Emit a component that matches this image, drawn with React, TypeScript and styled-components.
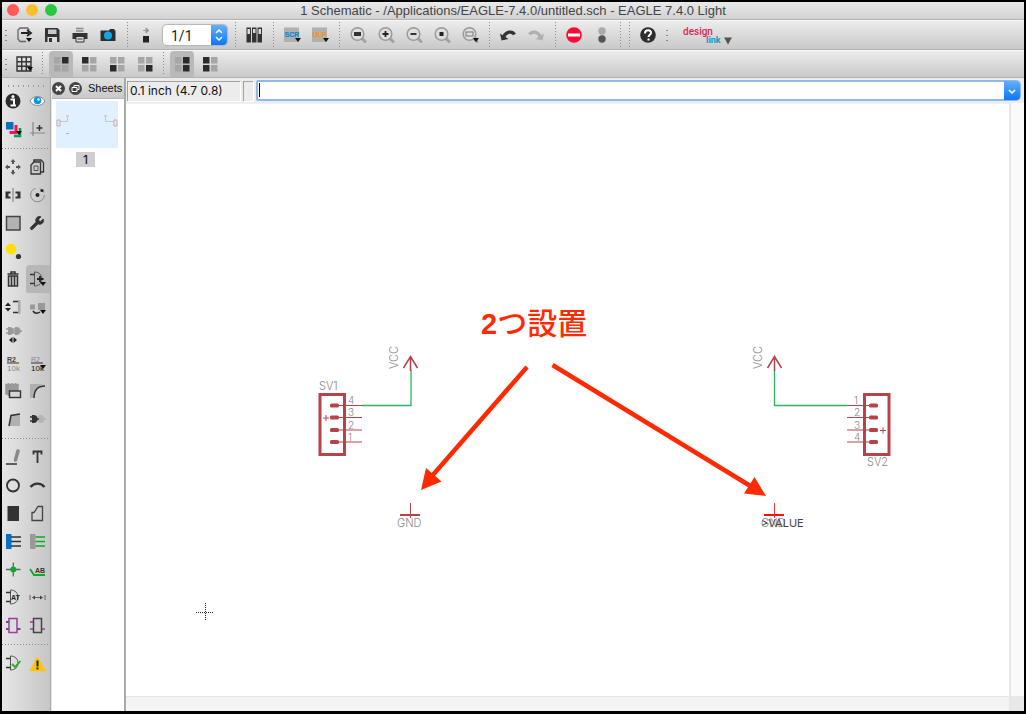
import React from "react";
import styled, { createGlobalStyle, css } from "styled-components";
import { Wrench } from "lucide-react";

const DARK = "#333";
const PALE = "#b0b0b0";
const GREEN = "#0bab2c";
const PART = "#b8424a";
const NOTE = "#ff2a00";

const GlobalStyle = createGlobalStyle`
  *, *::before, *::after { box-sizing: border-box; }
  body { margin: 0; background: #000; font-family: Inter, "Liberation Sans", sans-serif; color: #222; }
  button, input, select { font: inherit; color: inherit; margin: 0; padding: 0; border: 0; background: none; }
  svg { display: block; }
`;

const Frame = styled.div`
  display: flex;
  flex-direction: column;
  min-height: 100vh;
  border: 2px solid #000;
  border-bottom-width: 3px;
  background: #ececec;
`;

const TitleBar = styled.header`
  position: relative;
  display: flex;
  align-items: center;
  justify-content: center;
  height: 18px;
  background: linear-gradient(#e9e9e9, #d2d2d2);
  border-bottom: 1px solid #b4b4b4;
`;

const Title = styled.h1`
  margin: 0;
  font-family: "Liberation Sans", sans-serif;
  font-size: 13px;
  line-height: 16px;
  font-weight: 400;
  color: #444;
`;

const Lights = styled.div`
  position: absolute;
  left: 5px;
  top: 2px;
  display: flex;
  gap: 7px;
`;

const Light = styled.button<{ $color: string }>`
  width: 12px;
  height: 12px;
  border-radius: 50%;
  background: ${(p) => p.$color};
`;

const Toolbar = styled.div<{ $height: number }>`
  display: flex;
  align-items: center;
  height: ${(p) => p.$height}px;
  background: linear-gradient(#ececec, #c9c9c9);
  border-top: 1px solid #f8f8f8;
  border-bottom: 1px solid #b2b2b2;
`;

const Handle = styled.span<{ $width?: number }>`
  flex: none;
  width: ${(p) => p.$width ?? 8}px;
  height: 15px;
  background: radial-gradient(circle, #888 1px, transparent 1px) center / 4px 5px;
  background-repeat: no-repeat repeat;
`;

const Separator = styled.span<{ $width?: number }>`
  flex: none;
  align-self: stretch;
  width: ${(p) => p.$width ?? 10}px;
  margin: 1px 0;
  background: repeating-linear-gradient(#8c8c8c 0 1px, transparent 1px 3px) center / 1px 100% no-repeat;
`;

const pressed = css`
  &::before {
    content: "";
    position: absolute;
    inset: 1px 2px;
    border-radius: 4px 4px 2px 2px;
    background: #b9b9b9;
  }
`;

const ToolButton = styled.button<{ $on?: boolean }>`
  position: relative;
  flex: none;
  width: 28px;
  height: 28px;
  ${(p) => p.$on && pressed}
  svg { position: relative; }
`;

const PageSelect = styled.div`
  position: relative;
  flex: none;
  width: 64px;
  height: 20px;
  margin: 0 3px;
  border-radius: 4px;
  background: #fff;
  box-shadow: 0 0 1px 1px #b5b5b5;
  overflow: hidden;
  select {
    appearance: none;
    width: 100%;
    height: 20px;
    padding-left: 8px;
    font-family: Roboto, sans-serif;
    font-size: 14px;
    line-height: 20px;
  }
`;

const Stepper = styled.span`
  position: absolute;
  right: 0;
  top: 0;
  width: 16px;
  height: 100%;
  background: linear-gradient(#66aefb, #0a77f8);
  pointer-events: none;
`;

const LinkButton = styled.button`
  margin-left: 10px;
  height: 28px;
`;

const Body = styled.div`
  flex: 1;
  display: flex;
`;

const Palette = styled.aside`
  flex: none;
  width: 49px;
  background: linear-gradient(90deg, #e6e6e6, #c6c6c6);
  border-right: 1px solid #a9a9a9;
`;

const PaletteHandle = styled.div`
  height: 9px;
  margin: 0 4px;
  background: radial-gradient(circle, #999 1px, transparent 1px) 0 6px / 5px 4px repeat-x;
`;

const PaletteGrid = styled.div`
  display: grid;
  grid-template-columns: 24px 24px;
  grid-auto-rows: 28px;
`;

const PaletteRule = styled.div`
  height: 10px;
  background: repeating-linear-gradient(90deg, #8c8c8c 0 1px, transparent 1px 3px) center / 100% 1px no-repeat;
`;

const PaletteButton = styled.button<{ $on?: boolean }>`
  width: 24px;
  height: 28px;
  ${(p) => p.$on && "background: #b7b7b7; border-radius: 4px 0 0 2px;"}
`;

const Sheets = styled.section`
  flex: none;
  width: 75px;
  background: #fff;
  border-left: 1px solid #e8e8e8;
  border-right: 2px solid #a9a9a9;
`;

const SheetsHeader = styled.div`
  display: flex;
  align-items: center;
  gap: 4px;
  height: 21px;
  background: linear-gradient(#e4e4e4, #c8c8c8);
  border-bottom: 1px solid #b5b5b5;
`;

const SheetsTitle = styled.h2`
  margin: 0 0 0 2px;
  font-family: "Liberation Sans", sans-serif;
  font-size: 11px;
  line-height: 16px;
  font-weight: 400;
  color: #111;
`;

const RoundButton = styled.button`
  width: 13px;
  height: 13px;
`;

const SheetItem = styled.button`
  display: flex;
  flex-direction: column;
  align-items: center;
  gap: 4px;
  margin: 2px 4px;
  width: 62px;
`;

const Thumb = styled.span`
  background: #e0f0ff;
`;

const SheetNumber = styled.span`
  width: 19px;
  margin-right: 3px;
  font-size: 12px;
  line-height: 15px;
  font-weight: 500;
  background: #cfcfcf;
`;

const Main = styled.main`
  flex: 1;
  min-width: 0;
  display: flex;
  flex-direction: column;
`;

const CommandRow = styled.div`
  display: flex;
  align-items: center;
  gap: 3px;
  height: 25px;
  padding: 0 3px 0 1px;
  background: #ececec;
`;

const Sunken = styled.output<{ $width: number }>`
  flex: none;
  width: ${(p) => p.$width}px;
  height: 20px;
  padding-left: 2px;
  font-size: 12px;
  line-height: 18px;
  color: #111;
  white-space: nowrap;
  border: solid #a2a2a2;
  border-width: 1px 0 0 1px;
  box-shadow: 1px 1px 0 #fff;
`;

const Command = styled.div`
  position: relative;
  flex: 1;
  display: flex;
  height: 21px;
  border: 2px solid #8db8f0;
  border-radius: 2px 5px 5px 2px;
  background: #fff;
  input { flex: 1; min-width: 0; padding: 0 6px; font-size: 12px; outline: 0; }
  &::before {
    content: "";
    position: absolute;
    left: 1px;
    top: 1px;
    width: 1px;
    height: 14px;
    background: #000;
  }
`;

const DropButton = styled.button`
  width: 16px;
  margin: -1px -1px -1px 0;
  border-radius: 0 4px 4px 0;
  background: linear-gradient(#66aefb, #0a77f8);
`;

const Workspace = styled.div`
  flex: 1;
  display: grid;
  grid-template-columns: minmax(0, 1fr) 15px;
  grid-template-rows: 1fr 15px;
`;

const Canvas = styled.div`
  min-height: 592px;
  overflow: hidden;
  background: #fff;
  border-top: 1px solid #f0f0f0;
`;

const Track = styled.div<{ $side?: boolean }>`
  background: ${(p) => (p.$side ? "#fafafa" : "#f4f4f4")};
  border: 0 solid #e6e6e6;
  border-width: ${(p) => (p.$side ? "0 0 0 2px" : "1px 0 0")};
`;

const Corner = styled.div`
  background: #e8e8e8;
`;

type Drawn = { label: string; on?: boolean; children: React.ReactNode };

const Tool = ({ label, on, children }: Drawn) => (
  <ToolButton aria-label={label} $on={on}>
    <svg width="28" height="28" viewBox="-14 -14 28 28" fill="none">{children}</svg>
  </ToolButton>
);

const Cell = ({ label, on, children }: Drawn) => (
  <PaletteButton aria-label={label} $on={on}>
    <svg width="24" height="28" viewBox="-11 -14 24 28" fill="none">{children}</svg>
  </PaletteButton>
);

const Caret = ({ x = 6, y = 5 }: { x?: number; y?: number }) => (
  <path d={`M${x - 3} ${y - 2}h6l-3 4z`} fill="#111" />
);

const Lens = ({ children }: { children: React.ReactNode }) => (
  <>
    <path d="M4 3.500L7 6.500" stroke="#a2a2a2" strokeWidth="3" strokeLinecap="round" />
    <circle cx="-0.500" cy="-1" r="6.300" stroke="#999" strokeWidth="1.500" fill="#dedede" />
    {children}
  </>
);

const Quad = ({ dark }: { dark: number[] }) => (
  <>
    {[[-7, -7], [1, -7], [-7, 1], [1, 1]].map(([x, y], i) => (
      <rect key={i} x={x} y={y} width="6.500" height="6.500" fill={dark.includes(i) ? "#2b2b2b" : "#a6a6a6"} />
    ))}
  </>
);

const Gate = () => (
  <>
    <path d="M-2.500-7C2.500-7 5-3.500 5 0S2.500 7-2.500 7z" stroke="#555" />
    <path d="M-7-4.500h4.500M-7 4.500h4.500" stroke={DARK} strokeWidth="1.500" />
  </>
);

const Plug = ({ x, y, color }: { x: number; y: number; color: string }) => (
  <g fill={color}>
    <path d={`M${x} ${y - 4}h1.500c3 0 4 2 4 4s-1 4-4 4H${x}z`} />
    <path d={`M${x - 2} ${y - 2}h2M${x - 2} ${y + 2}h2M${x + 5} ${y}h2`} stroke={color} strokeWidth="1.300" />
  </g>
);

const SmallText = (p: React.SVGProps<SVGTextElement>) => (
  <text fontFamily="Liberation Sans, sans-serif" fontSize="8" {...p} />
);

const Arrow = () => (
  <>
    <path d="M-8-1.500L-6.500 5.500 0.500 4z" fill="currentColor" />
    <path d="M-4.500 2C-2-3.500 4-4.500 6.500-0.500" stroke="currentColor" strokeWidth="3.200" />
  </>
);

const pinRows = [405.5, 417.5, 430, 442];

type HeaderProps = { x: number; pinFrom: number; pinTo: number; padX: number; plusX: number; plusRow: number; nameX: number; names: string[] };

const Header = ({ x, pinFrom, pinTo, padX, plusX, plusRow, nameX, names }: HeaderProps) => (
  <g>
    <rect x={x} y="394.500" width="24.500" height="60" stroke={PART} strokeWidth="3" fill="none" />
    {pinRows.map((y, i) => (
      <g key={y}>
        <path d={`M${pinFrom} ${y}H${pinTo}`} stroke={PART} />
        <rect x={padX} y={y - 2} width="9" height="4" rx="1.500" fill={PART} />
        <text x={nameX} y={y - 1.5} fontSize="10">{names[i]}</text>
      </g>
    ))}
    <path d={`M${plusX - 3} ${pinRows[plusRow] + 0.5}h6m-3-3v6`} stroke={PART} />
  </g>
);

const Supply = ({ x }: { x: number }) => (
  <g>
    <path d={`M${x} 371V356M${x - 7} 368L${x} 356.500L${x + 7} 368`} stroke={PART} strokeWidth="1.500" fill="none" />
    <text transform={`translate(${x - 12.5} 369) rotate(-90)`} fontSize="11">VCC</text>
  </g>
);

const Schematic = () => (
  <svg width="884" height="592" viewBox="126 104 884 592" role="img" aria-label="Schematic" fontFamily="Inter, sans-serif" fontWeight="300" fill="#888">
    <g>
      <path d="M362 405.500H411V370M774.500 370V405.500H847" stroke="#2bb45d" strokeWidth="1.300" fill="none" />
      <Header x={320} pinFrom={336} pinTo={362} padX={330} plusX={326} plusRow={1} nameX={348} names={["4", "3", "2", "1"]} />
      <Header x={864.5} pinFrom={847} pinTo={872} padX={869} plusX={883} plusRow={2} nameX={854} names={["1", "2", "3", "4"]} />
      <Supply x={410.5} />
      <Supply x={774.5} />
      <text x="319" y="390" fontSize="11">SV1</text>
      <text x="867" y="466" fontSize="11">SV2</text>
      <path d="M410.500 503V518" stroke={PART} />
      <path d="M400 515H420" stroke={PART} strokeWidth="2" />
      <text x="397" y="527" fontSize="11">GND</text>
      <path d="M774.500 503V518" stroke="#ff3040" />
      <path d="M764 515H784" stroke="#ff1010" strokeWidth="2" />
      <text x="761" y="527" fontSize="11">GND</text>
      <text x="761" y="527" fontSize="11" fontWeight="400" fill="#444">&gt;VALUE</text>
      <path d="M196 612.500H214M205.500 603V621" stroke="#222" strokeDasharray="1 1" />
    </g>
    <g fill={NOTE} stroke="none">
      <path d="M527 367L432 476M552.500 365L752 487" stroke={NOTE} strokeWidth="4.500" />
      <path d="M421 490L426 468L441.500 481.500zM766 496L754.500 477L744 493.500z" />
      <text x="481" y="334" fontSize="30" fontFamily="'Liberation Sans', 'Noto Sans CJK JP', sans-serif">
        <tspan fontWeight="700" fontSize="29">2</tspan>
        <tspan fontFamily="'Noto Sans CJK JP', sans-serif" fontWeight="500">つ設置</tspan>
      </text>
    </g>
  </svg>
);

const ToolPalette = () => (
  <Palette aria-label="Tools">
    <PaletteHandle />
    <PaletteGrid>
      <Cell label="Info">
        <circle r="7.500" fill="#2c2c2c" />
        <path d="M-2.500-1.500H1V4M-2.500 4.500H3" stroke="#fff" strokeWidth="2" />
        <circle cx="0" cy="-4.500" r="1.500" fill="#fff" />
      </Cell>
      <Cell label="Show">
        <path d="M-7 0C-4-6 5-6 8 0 5 6-4 6-7 0z" fill="#fff" stroke="#888" />
        <circle cx="0.500" cy="-0.500" r="3.800" fill="#0d97e8" />
        <circle cx="1.500" cy="-1.500" r="1.200" fill="#e3f5ff" />
      </Cell>
      <Cell label="Display">
        <path d="M7-1V7H1" stroke="#079b52" strokeWidth="2.500" />
        <path d="M3-4V3.500H-3.500" stroke="#f1125c" strokeWidth="3" />
        <rect x="-7" y="-7" width="7.500" height="7.500" fill="#0a6fc0" />
        <Caret x={6} y={4} />
      </Cell>
      <Cell label="Mark">
        <path d="M-4-7V7M-7 4H8" stroke="#888" strokeWidth="1.200" />
        <path d="M-0.500-1H5.500M2.500-4V2" stroke={DARK} strokeWidth="1.500" />
      </Cell>
    </PaletteGrid>
    <PaletteRule />
    <PaletteGrid>
      <Cell label="Move">
        <path d="M0-8L2.500-5H1v2h-2v-2h-1.500zM0 8L2.500 5H1V3h-2v2h-1.500zM-8 0L-5-2.500V-1h2v2h-2v1.500zM8 0L5-2.500V-1H3v2h2v1.500z" fill="#555" />
      </Cell>
      <Cell label="Copy">
        <path d="M-3-5V-7H4L6.500-4.500V5H4" stroke={DARK} strokeWidth="1.300" />
        <path d="M-6-2L-3-5H3.500V7H-6z" stroke={DARK} strokeWidth="1.300" fill="#ccc" />
        <path d="M-3-1H1V3.500H-3z" stroke="#555" />
      </Cell>
      <Cell label="Mirror">
        <path d="M0-7V7" stroke="#777" />
        <path d="M-7.500-3.500h5v2h-2v3h2v2h-5zM7.500-3.500h-5v2h2v3h-2v2h5z" fill={DARK} />
      </Cell>
      <Cell label="Rotate">
        <circle cx="0.500" r="6.800" stroke="#888" strokeDasharray="30 4 6 3" />
        <circle cx="0.500" r="2" fill="#222" />
        <circle cx="5" cy="-4.500" r="1.600" fill="#222" />
      </Cell>
      <Cell label="Group"><rect x="-6.500" y="-6.500" width="13.500" height="13.500" fill="#b2b2b2" stroke="#444" strokeWidth="1.500" /></Cell>
      <Cell label="Change"><Wrench x={-8} y={-8} width={16} height={16} fill={DARK} stroke={DARK} strokeWidth={1} /></Cell>
      <Cell label="Cut">
        <circle cx="-2" cy="-2" r="5.300" fill="#ffdf00" />
        <circle cx="5.500" cy="5.500" r="2.600" fill={DARK} />
      </Cell>
      <span />
      <Cell label="Delete">
        <path d="M-5.500-5H5.500M-2-5V-7H2V-5" stroke={DARK} strokeWidth="1.500" />
        <path d="M-4.500-3H4.500V7H-4.500z" fill="#ccc" stroke={DARK} strokeWidth="1.500" />
        <path d="M-1.500-3V7M1.500-3V7" stroke={DARK} strokeWidth="1.500" />
      </Cell>
      <Cell label="Add" on>
        <Gate />
        <path d="M0 0H6.500M3-3V3" stroke="#222" strokeWidth="1.800" />
        <Caret x={6} y={5} />
      </Cell>
      <Cell label="Pinswap">
        <path d="M-8-1L-5-4.500-2-1zM-8 1L-5 4.500-2 1z" fill="#222" />
        <path d="M0-5.500H5M0 5.500H5" stroke={DARK} strokeWidth="1.500" />
        <rect x="5" y="-7" width="2.500" height="14" fill="#aaa" />
      </Cell>
      <Cell label="Replace">
        <rect x="-7" y="-2.500" width="5" height="5" fill="#999" />
        <rect x="1" y="-4" width="7" height="7" fill="#999" />
        <path d="M-4 4C-2 7 0 7 3 5" stroke="#222" strokeWidth="1.500" />
        <Caret x={6} y={5} />
      </Cell>
      <Cell label="Gateswap">
        <Plug x={-5} y={-4} color="#999" />
        <Plug x={2} y={-4} color="#999" />
        <path d="M-4 5L-0.500 2V8zM4 5L0.500 2V8z" fill="#222" />
      </Cell>
      <span />
      <Cell label="Name">
        <SmallText x="-6" y="-1.500" fontSize="7" fontWeight="700" fill="#444">R2</SmallText>
        <path d="M-6 0H6" stroke={DARK} />
        <SmallText x="-6" y="8" fill="#888">10k</SmallText>
      </Cell>
      <Cell label="Value">
        <SmallText x="-6" y="-1.500" fontSize="7" fill="#888">R2</SmallText>
        <path d="M-6 0H6" stroke={DARK} />
        <SmallText x="-6" y="8" fill="#111">10k</SmallText>
        <Caret x={6} y={4} />
      </Cell>
      <Cell label="Smash">
        <path d="M-7-6.500h12V3H-7zM-4.500-8v2M-1-8v2M2.500-8v2M-4.500 3v2" fill="#999" stroke="#999" strokeWidth="1.500" />
        <rect x="-3.500" y="0" width="11" height="6.500" fill="#d5d5d5" stroke={DARK} strokeWidth="1.400" />
      </Cell>
      <Cell label="Miter">
        <path d="M-7-7H8C0-6-3-1-3 7H-7z" fill="#b0b0b0" />
        <path d="M-3 7C-3-1 0-5 8-5" stroke={DARK} strokeWidth="1.500" />
      </Cell>
      <Cell label="Split">
        <path d="M-4 7L-2-4 7-5V7z" fill="#b0b0b0" />
        <path d="M-4 7L-2-3.500 7-5" stroke={DARK} strokeWidth="1.500" />
      </Cell>
      <Cell label="Invoke">
        <Plug x={2} y={0} color="#b5b5b5" />
        <Plug x={-5} y={0} color={DARK} />
      </Cell>
    </PaletteGrid>
    <PaletteRule />
    <PaletteGrid>
      <Cell label="Wire">
        <path d="M5-6L2.500 3" stroke="#888" strokeWidth="3.500" strokeLinecap="round" />
        <path d="M-7 7H4" stroke={DARK} strokeWidth="1.500" />
      </Cell>
      <Cell label="Text"><path d="M-3.500-2.500V-5.500H4.500V-2.500M0.500-5.500V6" stroke={DARK} strokeWidth="1.800" /></Cell>
      <Cell label="Circle"><circle cy="0.500" r="6" stroke={DARK} strokeWidth="1.800" /></Cell>
      <Cell label="Arc"><path d="M-6.500 2C-3-2.500 4-2.500 7.500 2" stroke={DARK} strokeWidth="2.400" /></Cell>
      <Cell label="Rect"><rect x="-5.500" y="-7" width="11.500" height="15" fill={DARK} /></Cell>
      <Cell label="Polygon"><path d="M-5-0.500H-3L1-6.500H5.500V7.500H-5z" stroke="#444" strokeWidth="1.300" /></Cell>
      <Cell label="Bus">
        <rect x="-7" y="-7" width="5.500" height="15" fill="#0a6fc0" />
        <path d="M-2-4H8M-2 0.500H8M-2 5H8" stroke={DARK} strokeWidth="1.700" />
      </Cell>
      <Cell label="Net">
        <rect x="-7" y="-7" width="5.500" height="15" fill="#999" />
        <path d="M-1.500-4H8M-1.500 0.500H8M-1.500 5H8" stroke={GREEN} strokeWidth="1.700" />
      </Cell>
      <Cell label="Junction">
        <path d="M-7 0.500H7.500M0.300-6.500V7.500" stroke="#666" strokeWidth="1.300" />
        <circle cx="0.300" cy="0.500" r="3" fill={GREEN} />
      </Cell>
      <Cell label="Label">
        <path d="M-7 0L-3 6H8" stroke={GREEN} strokeWidth="1.800" />
        <SmallText x="-2" y="4" fontSize="7" fontWeight="700" fill={DARK}>AB</SmallText>
      </Cell>
      <Cell label="Attribute">
        <Gate />
        <SmallText x="-2" y="3" fontSize="7" fontWeight="700" fill="#222">AT</SmallText>
      </Cell>
      <Cell label="Dimension">
        <path d="M-7-2V3M8-2V3M-4 0.500H5" stroke="#666" />
        <path d="M-5 0.500L-2-1.500V2.500zM6 0.500L3-1.500V2.500z" fill="#444" />
      </Cell>
      <Cell label="Module">
        <path d="M-7-3H-4M-7 4H-4M4 4H7.500" stroke={DARK} strokeWidth="1.700" />
        <rect x="-4" y="-6.500" width="8" height="14" fill="#ddd" stroke="#a13aa5" strokeWidth="1.500" />
      </Cell>
      <Cell label="Port">
        <path d="M-7-3H-4M-7 4H-4M4 4H8" stroke="#a13aa5" strokeWidth="1.700" />
        <rect x="-3.500" y="-6.500" width="8" height="14" fill="#ccc" stroke="#444" strokeWidth="1.500" />
      </Cell>
    </PaletteGrid>
    <PaletteRule />
    <PaletteGrid>
      <Cell label="ERC">
        <Gate />
        <path d="M-1 1L2 4 7.500-2" stroke="#26b413" strokeWidth="1.800" />
      </Cell>
      <Cell label="Errors">
        <path d="M0.500-5.500L7.500 7.500H-6.500z" fill="#ffc400" stroke="#ffc400" strokeWidth="1.500" strokeLinejoin="round" />
        <path d="M0.500-2.500V3.500M0.500 4.500V6.500" stroke="#222" strokeWidth="2" />
      </Cell>
    </PaletteGrid>
  </Palette>
);

export default function App() {
  return (
    <Frame>
      <GlobalStyle />
      <TitleBar>
        <Lights>
          <Light aria-label="Close" $color="#fc5b57" />
          <Light aria-label="Minimise" $color="#fdbe2e" />
          <Light aria-label="Zoom window" $color="#28c840" />
        </Lights>
        <Title>1 Schematic - /Applications/EAGLE-7.4.0/untitled.sch - EAGLE 7.4.0 Light</Title>
      </TitleBar>

      <Toolbar $height={30}>
        <Handle />
        <Tool label="Open">
          <path d="M5-5V-5.500L3.500-7H-4L-6-5V4L-4 6.500H2" stroke="#666" strokeWidth="1.300" />
          <path d="M-3-2H5M3-5L7-2 3 1" stroke="#222" strokeWidth="1.800" />
          <Caret x={5} y={5} />
        </Tool>
        <Tool label="Save">
          <path d="M-7-7H5.500L7.500-5V7H-7z" fill="#333" />
          <rect x="-4" y="-5.500" width="8.500" height="4.500" fill="#c9c9c9" />
          <rect x="-4.500" y="2" width="9.500" height="5" fill="#ddd" />
          <rect x="-3" y="3" width="3" height="4" fill="#333" />
        </Tool>
        <Tool label="Print">
          <path d="M-4-6.500H3.500M-4-4H3.500" stroke="#888" strokeWidth="1.500" />
          <path d="M-7.500-2H7.500V4H-7.500z" fill="#333" />
          <path d="M-4 1.500H4V7H-4z" fill="#ddd" stroke="#333" />
          <path d="M-2.500 4H2.500" stroke="#333" />
        </Tool>
        <Tool label="Camera">
          <path d="M-7.500-4.500H1L2-6H6L7-4.500H7.500V6H-7.500z" fill="#2b2f31" />
          <circle cy="0.500" r="4" fill="#10a6e4" />
        </Tool>
        <Separator />
        <Tool label="Switch to board">
          <path d="M-3-4.500H0M0-7V-2L3-4.500z" fill="#999" stroke="#999" />
          <rect x="-3" y="1" width="6" height="6.500" fill="#222" />
        </Tool>
        <PageSelect>
          <select aria-label="Sheet" defaultValue="1/1"><option>1/1</option></select>
          <Stepper>
            <svg width="16" height="20" fill="none" stroke="#fff" strokeWidth="1.500"><path d="M5 8L8 5l3 3M5 12l3 3 3-3" /></svg>
          </Stepper>
        </PageSelect>
        <Separator />
        <Tool label="Library">
          {[-7, -1.5, 4].map((x, i) => (
            <g key={x}>
              <rect x={x} y="-7" width="3.500" height="14" fill="#333" stroke="#333" />
              <rect x={x + 0.5} y="-6" width="2.500" height={i === 1 ? 4 : 5} fill="#ddd" />
            </g>
          ))}
        </Tool>
        <Separator />
        <Tool label="Script">
          <rect x="-8" y="-7.500" width="15" height="14.500" fill={PALE} />
          <SmallText x="-7.500" y="2" fontSize="7" fontWeight="700" fill="#0b8ad0" stroke="#0b8ad0" strokeWidth="0.200">SCR</SmallText>
          <Caret x={6} y={5} />
        </Tool>
        <Tool label="ULP">
          <rect x="-8" y="-7.500" width="15" height="14.500" fill={PALE} />
          <SmallText x="-7.500" y="2" fontSize="7" fontWeight="700" fill="#f8931c" stroke="#f8931c" strokeWidth="0.200">ULP</SmallText>
          <Caret x={6} y={5} />
        </Tool>
        <Separator />
        <Tool label="Zoom to fit"><Lens><rect x="-4" y="-3" width="7" height="4" fill="#333" /></Lens></Tool>
        <Tool label="Zoom in"><Lens><path d="M-3.500-1H2.500M-0.500-4V2" stroke="#222" strokeWidth="1.800" /></Lens></Tool>
        <Tool label="Zoom out"><Lens><path d="M-3.500-1H2.500" stroke="#222" strokeWidth="1.800" /></Lens></Tool>
        <Tool label="Redraw"><Lens><rect x="-2.500" y="-3" width="4" height="4" fill="#222" /></Lens></Tool>
        <Tool label="Zoom select"><Lens><rect x="-4" y="-3" width="7" height="4" stroke="#777" /></Lens><Caret x={6} y={5} /></Tool>
        <Separator />
        <Tool label="Undo"><g color="#333"><Arrow /></g></Tool>
        <Tool label="Redo"><g color="#b0b0b0" transform="scale(-1 1)"><Arrow /></g></Tool>
        <Separator />
        <Tool label="Stop"><circle r="7.800" fill="#fb0a32" /><rect x="-6" y="-1.500" width="12" height="3" fill="#fff" /></Tool>
        <Tool label="Go"><circle cy="-4" r="3.700" fill="#aaa" /><circle cy="4" r="3.700" fill="#555" /></Tool>
        <Separator $width={9} />
        <Separator $width={9} />
        <Tool label="Help">
          <circle r="7.800" fill="#2d2d2d" />
          <path d="M-3-1.500C-3-6 3.500-5.500 3-2 2.500 0 0.500 0 0.500 2M0.500 3.500V5.500" stroke="#fff" strokeWidth="2" />
        </Tool>
        <Handle $width={10} />
        <LinkButton aria-label="Design link">
          <svg width="52" height="28" fontFamily="Roboto, sans-serif">
            <text x="1" y="14" fontSize="10" fontWeight="500" fill="#dc2555">design</text>
            <text x="24" y="22" fontSize="9" fontWeight="700" fill="#1795c4">link</text>
            <path d="M42 16.500H50L46 23.500z" fill="#555" />
          </svg>
        </LinkButton>
      </Toolbar>

      <Toolbar $height={28}>
        <Handle />
        <Tool label="Grid">
          <path d="M-7-7H7V7H-7zM-7-2.300H7M-7 2.300H7M-2.300-7V7M2.300-7V7" stroke="#333" strokeWidth="1.400" />
          <Caret x={6} y={5} />
        </Tool>
        <Separator $width={9} />
        <Tool label="Quadrant 1" on><Quad dark={[1]} /></Tool>
        <Tool label="Quadrant 2"><Quad dark={[0]} /></Tool>
        <Tool label="Quadrant 3"><Quad dark={[2]} /></Tool>
        <Tool label="Quadrant 4"><Quad dark={[3]} /></Tool>
        <Separator $width={9} />
        <Tool label="Right half" on><Quad dark={[1, 3]} /></Tool>
        <Tool label="Left half"><Quad dark={[0, 2]} /></Tool>
      </Toolbar>

      <Body>
        <ToolPalette />
        <Sheets>
          <SheetsHeader>
            <RoundButton aria-label="Close sheets">
              <svg width="13" height="13"><circle cx="6.500" cy="6.500" r="6.500" fill="#444" /><path d="M4 4l5 5M9 4l-5 5" stroke="#fff" strokeWidth="2" /></svg>
            </RoundButton>
            <RoundButton aria-label="Detach sheets">
              <svg width="13" height="13" fill="none" stroke="#fff"><circle cx="6.500" cy="6.500" r="6.500" fill="#444" stroke="none" /><path d="M5 5V3.500h5v4H8.500M3 5.500h5v4H3z" /></svg>
            </RoundButton>
            <SheetsTitle>Sheets</SheetsTitle>
          </SheetsHeader>
          <SheetItem>
            <Thumb>
              <svg width="62" height="47" fill="none">
                <path d="M4 20.500H11.500V16M49.500 16V20.500H58" stroke="#a9d8bd" />
                <path d="M1 19h3v6H1zM58 19h3v6h-3zM10 15h3M48 15h3M10 32.500h3" stroke="#d5a3b5" />
              </svg>
            </Thumb>
            <SheetNumber>1</SheetNumber>
          </SheetItem>
        </Sheets>
        <Main>
          <CommandRow>
            <Sunken $width={113}>0.1 inch (4.7 0.8)</Sunken>
            <Sunken $width={10} />
            <Command>
              <input aria-label="Command" type="text" />
              <DropButton aria-label="Command history">
                <svg width="16" height="18" fill="none" stroke="#fff" strokeWidth="1.500"><path d="M5 8l3 3 3-3" /></svg>
              </DropButton>
            </Command>
          </CommandRow>
          <Workspace>
            <Canvas><Schematic /></Canvas>
            <Track $side />
            <Track />
            <Corner />
          </Workspace>
        </Main>
      </Body>
    </Frame>
  );
}
